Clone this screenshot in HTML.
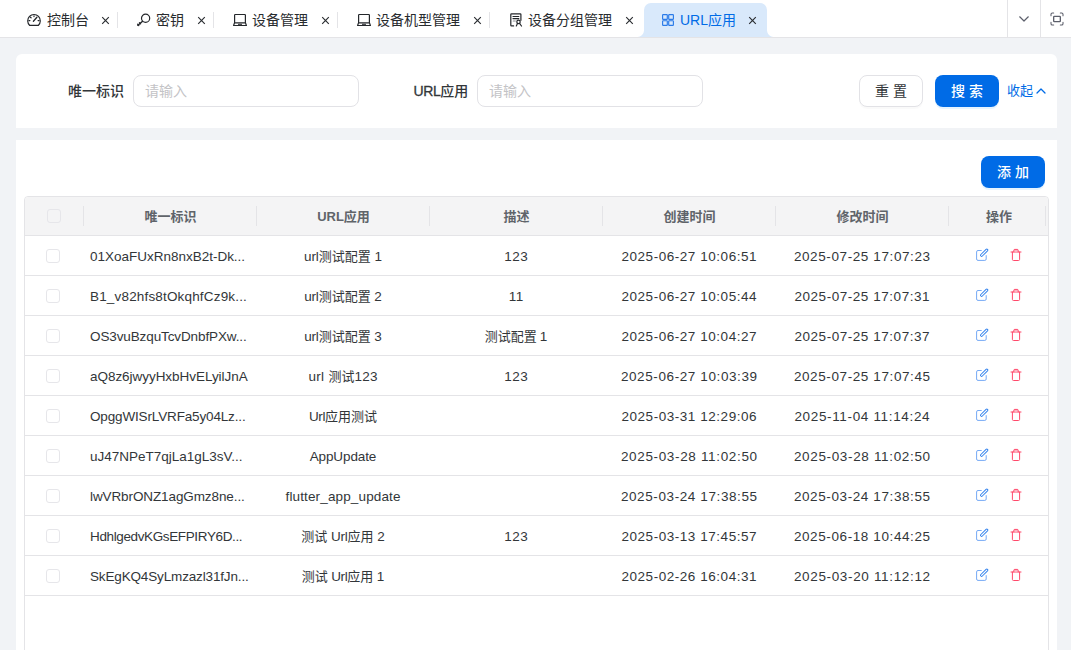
<!DOCTYPE html>
<html lang="zh-CN">
<head>
<meta charset="utf-8">
<title>URL应用</title>
<style>
*{box-sizing:border-box;margin:0;padding:0}
html,body{width:1071px;height:650px;overflow:hidden}
body{background:#f1f3f6;font-family:"Liberation Sans","Noto Sans CJK SC",sans-serif;font-size:14px;color:#323639;position:relative}
.abs{position:absolute}
/* tab bar */
#tabbar{position:absolute;left:0;top:0;width:1071px;height:38px;background:#fff;border-bottom:1px solid #e4e4e7}
.tab{position:absolute;top:2px;height:37px;line-height:37px;font-size:14px;color:#282b2e;white-space:nowrap}
.tab .t{position:absolute;top:1px}
.tab svg{position:absolute}
.ti{fill:none;stroke:#24272b;stroke-width:1.2;stroke-linecap:round;stroke-linejoin:round}
.sep{position:absolute;top:12px;width:1px;height:16px;background:#e4e4e7}
.vline{position:absolute;top:0;width:1px;height:37px;background:#e4e4e7}
.x{position:absolute;top:15.5px;margin-left:-.5px;width:9px;height:9px}
.x svg{display:block;width:9px;height:9px;stroke:#2a2d31;stroke-width:1.15;fill:none}
#active{position:absolute;left:644px;top:3px;width:123px;height:34px;background:#d9e9fb;border-radius:7px 7px 0 0}
#active:before,#active:after{content:"";position:absolute;bottom:0;width:7px;height:7px}
#active:before{left:-7px;background:radial-gradient(circle at 0 0,transparent 6.5px,#d9e9fb 7.5px)}
#active:after{right:-7px;background:radial-gradient(circle at 100% 0,transparent 6.5px,#d9e9fb 7.5px)}
/* cards */
.card{position:absolute;left:16px;width:1041px;background:#fff;border-radius:6px}
.lbl{position:absolute;font-weight:500;font-size:14px;line-height:32px;top:75px;white-space:nowrap}
.inp{position:absolute;top:75px;height:32px;width:226px;border:1px solid #e2e2e6;border-radius:8px;background:#fff;line-height:30px;padding-left:11px;color:#c3c3c6;font-size:14px}
.btn{position:absolute;height:32px;width:64px;border-radius:8px;text-align:center;line-height:30px;font-size:14px;white-space:nowrap}
.btn.def{border:1px solid #e2e2e6;background:#fff;color:#323639;box-shadow:0 2px 0 rgba(0,0,0,.02)}
.btn.pri{background:#006be6;color:#fff;font-weight:500;line-height:32px;box-shadow:0 2px 0 rgba(5,145,255,.1)}
/* table */
#tbl{position:absolute;left:24px;top:196px;width:1025px;height:460px;border:1px solid #e4e4e7;border-radius:4px 4px 0 0;background:#fff;overflow:hidden}
#thead{position:absolute;left:0;top:0;width:1023px;height:39px;background:#f4f4f5;border-bottom:1px solid #e4e4e7;border-radius:3px 3px 0 0}
.th{position:absolute;top:0;height:39px;line-height:39px;text-align:center;font-weight:700;font-size:13px;color:#60646a;white-space:nowrap}
.hs{position:absolute;top:9px;width:1px;height:20px;background:#e4e4e7}
.row{position:absolute;left:25px;width:1023px;height:40px;border-bottom:1px solid #e4e4e7;line-height:41px;font-size:13px;color:#323639}
.row b{font-weight:400;font-size:13.5px}
.cb{position:absolute;width:14px;height:14px;border:1px solid #e6e6ea;border-radius:3px}
.c{position:absolute;top:0;height:39px;white-space:nowrap;text-align:center}
.c.id{left:65px;text-align:left}
.c.c2{left:231.5px;width:173px}
.c.c3{left:404.5px;width:173px}
.c.c4{left:577.5px;width:173px}
.c.c5{left:750.5px;width:173px}
.ic{width:14px;height:14px;fill:none;stroke-width:.95;stroke-linecap:round;stroke-linejoin:round;display:block}
.ed{stroke:#2f80ed}
.dl{stroke:#ff3f63}
.edw{position:absolute;left:950px;top:12px}
.dlw{position:absolute;left:984px;top:12px}
</style>
</head>
<body>
<div id="tabbar">
  <div id="active"></div>
  <!-- tab 1 -->
<svg class="abs ti" style="left:27px;top:13px" width="14" height="14" viewBox="0 0 14 14"><path d="M2.75 12.45A6.3 6.3 0 1 1 11.25 12.45Z"/><path d="M6.4 8.2L9.9 4.3" stroke-width="1.3"/><path d="M7 2.9v.7M1.9 7.6h1M11.1 7.6h1M3.4 4.2l.7.6"/></svg>
<span class="tab" style="left:47px">控制台</span>
<span class="x" style="left:101px"><svg viewBox="0 0 9 9"><path d="M1.2 1.200l6.600 6.600M7.800 1.200l-6.600 6.600"/></svg></span>
<i class="sep" style="left:117px"></i>
<!-- tab 2 -->
<svg class="abs ti" style="left:135.5px;top:13px" width="15" height="14" viewBox="0 0 15 14"><circle cx="9.6" cy="5.3" r="4.1"/><path d="M6.6 8.2L1.9 12.2" stroke-width="1.5"/><path d="M3.4 9.6l1.2 1.3M1.6 11.2l1.2 1.3" stroke-width="1.2"/></svg>
<span class="tab" style="left:156px">密钥</span>
<span class="x" style="left:197px"><svg viewBox="0 0 9 9"><path d="M1.2 1.200l6.600 6.600M7.800 1.200l-6.600 6.600"/></svg></span>
<i class="sep" style="left:213px"></i>
<!-- tab 3 -->
<svg class="abs ti" style="left:233px;top:13px" width="14" height="14" viewBox="0 0 14 14"><path d="M1.6 9.6V2.2a.7.7 0 0 1 .7-.7h9.4a.7.7 0 0 1 .7.7v7.4"/><path d="M1.5 9.9h11l.9 2.6H.6z"/><path d="M5.4 11.3h3.2" stroke-width="1"/></svg>
<span class="tab" style="left:252px">设备管理</span>
<span class="x" style="left:321px"><svg viewBox="0 0 9 9"><path d="M1.2 1.200l6.600 6.600M7.800 1.200l-6.600 6.600"/></svg></span>
<i class="sep" style="left:337px"></i>
<!-- tab 4 -->
<svg class="abs ti" style="left:357px;top:13px" width="14" height="14" viewBox="0 0 14 14"><path d="M1.6 9.6V2.2a.7.7 0 0 1 .7-.7h9.4a.7.7 0 0 1 .7.7v7.4"/><path d="M1.5 9.9h11l.9 2.6H.6z"/><path d="M5.4 11.3h3.2" stroke-width="1"/></svg>
<span class="tab" style="left:376px">设备机型管理</span>
<span class="x" style="left:473px"><svg viewBox="0 0 9 9"><path d="M1.2 1.200l6.600 6.600M7.800 1.200l-6.600 6.600"/></svg></span>
<i class="sep" style="left:489px"></i>
<!-- tab 5 -->
<svg class="abs ti" style="left:509px;top:13px" width="14" height="14" viewBox="0 0 14 14"><path d="M4.6 12.9H2.5a.7.7 0 0 1-.7-.7V1.5a.7.7 0 0 1 .7-.7h8.700a.7.7 0 0 1 .7.7v5.800"/><path d="M4 3.500h5.800M4 5.600h5.800"/><path d="M4.300 8h2" stroke="#8a8c90"/><circle cx="9.500" cy="8.900" r="1.700"/><path d="M8.500 10.400L7.300 13M10.500 10.400L12.500 13"/></svg>
<span class="tab" style="left:528px">设备分组管理</span>
<span class="x" style="left:625px"><svg viewBox="0 0 9 9"><path d="M1.2 1.200l6.600 6.600M7.800 1.200l-6.600 6.600"/></svg></span>
<!-- tab 6 active -->
<svg class="abs" style="left:661px;top:13px" width="14" height="14" viewBox="0 0 14 14" fill="none" stroke="#2b7be9" stroke-width="1.15"><rect x="1.600" y="1.600" width="4.700" height="4.700" rx=".6"/><rect x="7.700" y="1.600" width="4.700" height="4.700" rx=".6"/><rect x="1.600" y="7.700" width="4.700" height="4.700" rx=".6"/><rect x="7.700" y="7.700" width="4.700" height="4.700" rx=".6"/></svg>
<span class="tab" style="left:680px;color:#006be6">URL应用</span>
<span class="x" style="left:748px"><svg viewBox="0 0 9 9"><path d="M1.2 1.200l6.600 6.600M7.800 1.200l-6.600 6.600"/></svg></span>
<!-- right tools -->
<i class="vline" style="left:1007px"></i>
<svg class="abs" style="left:1018px;top:13px" width="12" height="12" viewBox="0 0 12 12" fill="none" stroke="#5c5f6b" stroke-width="1.2" stroke-linecap="round" stroke-linejoin="round"><path d="M1.700 3.800L6 8l4.300-4.200"/></svg>
<i class="vline" style="left:1040px"></i>
<svg class="abs" style="left:1049px;top:11px" width="16" height="16" viewBox="0 0 24 24" fill="none" stroke="#5c5f6b" stroke-width="2" stroke-linecap="round" stroke-linejoin="round"><path stroke-width="1.600" d="M3 7V5a2 2 0 0 1 2-2h2M17 3h2a2 2 0 0 1 2 2v2M21 17v2a2 2 0 0 1-2 2h-2M7 21H5a2 2 0 0 1-2-2v-2"/><rect width="10" height="8" x="7" y="8" rx="1"/></svg>

</div>

<div class="card" style="top:54px;height:74px;border-radius:6px 6px 0 0"></div>
<div class="lbl" style="left:68px">唯一标识</div>
<div class="inp" style="left:133px">请输入</div>
<div class="lbl" style="left:413.5px"><span style="-webkit-text-stroke:.3px #323639;letter-spacing:-.4px">URL</span>应用</div>
<div class="inp" style="left:477px">请输入</div>
<div class="btn def" style="left:859px;top:75px">重 置</div>
<div class="btn pri" style="left:935px;top:75px">搜 索</div>
<div class="abs" style="left:1007px;top:75px;line-height:32px;color:#006be6;font-size:13px;white-space:nowrap">收起</div>
<svg class="abs" style="left:1035px;top:85px" width="12" height="12" viewBox="0 0 12 12" fill="none" stroke="#006be6" stroke-width="1.3" stroke-linecap="round" stroke-linejoin="round"><path d="M2 8l4-4 4 4"/></svg>

<div class="card" style="top:140px;height:520px;border-radius:0"></div>
<div class="btn pri" style="left:981px;top:156px">添 加</div>

<div id="tbl">
  <div id="thead">
    <span class="cb" style="left:22px;top:12px"></span>
    <i class="hs" style="left:58px"></i>
    <span class="th" style="left:59px;width:173px">唯一标识</span>
    <i class="hs" style="left:231px"></i>
    <span class="th" style="left:232px;width:173px">URL应用</span>
    <i class="hs" style="left:404px"></i>
    <span class="th" style="left:405px;width:173px">描述</span>
    <i class="hs" style="left:577px"></i>
    <span class="th" style="left:578px;width:173px">创建时间</span>
    <i class="hs" style="left:750px"></i>
    <span class="th" style="left:751px;width:173px">修改时间</span>
    <i class="hs" style="left:923px"></i>
    <span class="th" style="left:924px;width:100px">操作</span>
    <i class="hs" style="left:1020px"></i>
  </div>
</div>
<div class="row" style="top:236px"><span class="cb" style="left:21.2px;top:13px"></span><span class="c id"><b style="letter-spacing:-0.01px;margin-right:0.01px">01XoaFUxRn8nxB2t-Dk...</b></span><span class="c c2"><b style="letter-spacing:-0.12px">url</b>测试配置<b style="letter-spacing:-0.12px;margin-right:0.12px">&nbsp;1</b></span><span class="c c3"><b style="letter-spacing:0.55px;margin-right:-0.55px">123</b></span><span class="c c4"><b style="letter-spacing:0.54px;margin-right:-0.54px">2025-06-27 10:06:51</b></span><span class="c c5"><b style="letter-spacing:0.60px;margin-right:-0.60px">2025-07-25 17:07:23</b></span><span class="edw"><svg class="ic ed" viewBox="0 0 14 14"><path d="M6.300 2.500H3a1.400 1.400 0 0 0-1.400 1.400v7.100a1.400 1.400 0 0 0 1.400 1.400h6.800a1.400 1.400 0 0 0 1.400-1.400V7.600" stroke="#6ea4f4"/><rect x="-1.050" y="-4.700" width="2.100" height="9.400" rx="1.050" transform="translate(9.200 4.700) rotate(45)"/></svg></span><span class="dlw"><svg class="ic dl" viewBox="0 0 14 14"><path d="M2 4h10"/><path d="M3.400 4v7.400a1.100 1.100 0 0 0 1.100 1.100h5a1.100 1.100 0 0 0 1.100-1.100V4"/><path d="M4.800 3.900V2.300a.9.900 0 0 1 .9-.9h2.600a.9.900 0 0 1 .9.900v1.600" fill="#fbb4c2"/></svg></span></div>
<div class="row" style="top:276px"><span class="cb" style="left:21.2px;top:13px"></span><span class="c id"><b style="letter-spacing:0.17px;margin-right:-0.17px">B1_v82hfs8tOkqhfCz9k...</b></span><span class="c c2"><b style="letter-spacing:-0.18px">url</b>测试配置<b style="letter-spacing:-0.18px;margin-right:0.18px">&nbsp;2</b></span><span class="c c3"><b style="letter-spacing:0.55px;margin-right:-0.55px">11</b></span><span class="c c4"><b style="letter-spacing:0.54px;margin-right:-0.54px">2025-06-27 10:05:44</b></span><span class="c c5"><b style="letter-spacing:0.54px;margin-right:-0.54px">2025-07-25 17:07:31</b></span><span class="edw"><svg class="ic ed" viewBox="0 0 14 14"><path d="M6.300 2.500H3a1.400 1.400 0 0 0-1.400 1.400v7.100a1.400 1.400 0 0 0 1.400 1.400h6.800a1.400 1.400 0 0 0 1.400-1.400V7.600" stroke="#6ea4f4"/><rect x="-1.050" y="-4.700" width="2.100" height="9.400" rx="1.050" transform="translate(9.200 4.700) rotate(45)"/></svg></span><span class="dlw"><svg class="ic dl" viewBox="0 0 14 14"><path d="M2 4h10"/><path d="M3.400 4v7.400a1.100 1.100 0 0 0 1.100 1.100h5a1.100 1.100 0 0 0 1.100-1.100V4"/><path d="M4.800 3.900V2.300a.9.900 0 0 1 .9-.9h2.600a.9.900 0 0 1 .9.900v1.600" fill="#fbb4c2"/></svg></span></div>
<div class="row" style="top:316px"><span class="cb" style="left:21.2px;top:13px"></span><span class="c id"><b style="letter-spacing:-0.11px;margin-right:0.11px">OS3vuBzquTcvDnbfPXw...</b></span><span class="c c2"><b style="letter-spacing:-0.18px">url</b>测试配置<b style="letter-spacing:-0.18px;margin-right:0.18px">&nbsp;3</b></span><span class="c c3">测试配置<b style="letter-spacing:-1.00px;margin-right:1.00px">&nbsp;1</b></span><span class="c c4"><b style="letter-spacing:0.54px;margin-right:-0.54px">2025-06-27 10:04:27</b></span><span class="c c5"><b style="letter-spacing:0.54px;margin-right:-0.54px">2025-07-25 17:07:37</b></span><span class="edw"><svg class="ic ed" viewBox="0 0 14 14"><path d="M6.300 2.500H3a1.400 1.400 0 0 0-1.400 1.400v7.100a1.400 1.400 0 0 0 1.400 1.400h6.800a1.400 1.400 0 0 0 1.400-1.400V7.600" stroke="#6ea4f4"/><rect x="-1.050" y="-4.700" width="2.100" height="9.400" rx="1.050" transform="translate(9.200 4.700) rotate(45)"/></svg></span><span class="dlw"><svg class="ic dl" viewBox="0 0 14 14"><path d="M2 4h10"/><path d="M3.400 4v7.400a1.100 1.100 0 0 0 1.100 1.100h5a1.100 1.100 0 0 0 1.100-1.100V4"/><path d="M4.800 3.900V2.300a.9.900 0 0 1 .9-.9h2.600a.9.900 0 0 1 .9.900v1.600" fill="#fbb4c2"/></svg></span></div>
<div class="row" style="top:356px"><span class="cb" style="left:21.2px;top:13px"></span><span class="c id"><b style="letter-spacing:-0.04px;margin-right:0.04px">aQ8z6jwyyHxbHvELyilJnA</b></span><span class="c c2"><b style="letter-spacing:0.27px">url&nbsp;</b>测试<b style="letter-spacing:0.27px;margin-right:-0.27px">123</b></span><span class="c c3"><b style="letter-spacing:0.55px;margin-right:-0.55px">123</b></span><span class="c c4"><b style="letter-spacing:0.60px;margin-right:-0.60px">2025-06-27 10:03:39</b></span><span class="c c5"><b style="letter-spacing:0.60px;margin-right:-0.60px">2025-07-25 17:07:45</b></span><span class="edw"><svg class="ic ed" viewBox="0 0 14 14"><path d="M6.300 2.500H3a1.400 1.400 0 0 0-1.400 1.400v7.100a1.400 1.400 0 0 0 1.400 1.400h6.800a1.400 1.400 0 0 0 1.400-1.400V7.600" stroke="#6ea4f4"/><rect x="-1.050" y="-4.700" width="2.100" height="9.400" rx="1.050" transform="translate(9.200 4.700) rotate(45)"/></svg></span><span class="dlw"><svg class="ic dl" viewBox="0 0 14 14"><path d="M2 4h10"/><path d="M3.400 4v7.400a1.100 1.100 0 0 0 1.100 1.100h5a1.100 1.100 0 0 0 1.100-1.100V4"/><path d="M4.800 3.900V2.300a.9.900 0 0 1 .9-.9h2.600a.9.900 0 0 1 .9.900v1.600" fill="#fbb4c2"/></svg></span></div>
<div class="row" style="top:396px"><span class="cb" style="left:21.2px;top:13px"></span><span class="c id"><b style="letter-spacing:-0.15px;margin-right:0.15px">OpggWISrLVRFa5y04Lz...</b></span><span class="c c2"><b style="letter-spacing:-0.37px">Url</b>应用测试</span><span class="c c3"></span><span class="c c4"><b style="letter-spacing:0.54px;margin-right:-0.54px">2025-03-31 12:29:06</b></span><span class="c c5"><b style="letter-spacing:0.66px;margin-right:-0.66px">2025-11-04 11:14:24</b></span><span class="edw"><svg class="ic ed" viewBox="0 0 14 14"><path d="M6.300 2.500H3a1.400 1.400 0 0 0-1.400 1.400v7.100a1.400 1.400 0 0 0 1.400 1.400h6.800a1.400 1.400 0 0 0 1.400-1.400V7.600" stroke="#6ea4f4"/><rect x="-1.050" y="-4.700" width="2.100" height="9.400" rx="1.050" transform="translate(9.200 4.700) rotate(45)"/></svg></span><span class="dlw"><svg class="ic dl" viewBox="0 0 14 14"><path d="M2 4h10"/><path d="M3.400 4v7.400a1.100 1.100 0 0 0 1.100 1.100h5a1.100 1.100 0 0 0 1.100-1.100V4"/><path d="M4.800 3.900V2.300a.9.900 0 0 1 .9-.9h2.600a.9.900 0 0 1 .9.900v1.600" fill="#fbb4c2"/></svg></span></div>
<div class="row" style="top:436px"><span class="cb" style="left:21.2px;top:13px"></span><span class="c id"><b style="letter-spacing:-0.01px;margin-right:0.01px">uJ47NPeT7qjLa1gL3sV...</b></span><span class="c c2"><b style="letter-spacing:-0.11px;margin-right:0.11px">AppUpdate</b></span><span class="c c3"></span><span class="c c4"><b style="letter-spacing:0.66px;margin-right:-0.66px">2025-03-28 11:02:50</b></span><span class="c c5"><b style="letter-spacing:0.66px;margin-right:-0.66px">2025-03-28 11:02:50</b></span><span class="edw"><svg class="ic ed" viewBox="0 0 14 14"><path d="M6.300 2.500H3a1.400 1.400 0 0 0-1.400 1.400v7.100a1.400 1.400 0 0 0 1.400 1.400h6.800a1.400 1.400 0 0 0 1.400-1.400V7.600" stroke="#6ea4f4"/><rect x="-1.050" y="-4.700" width="2.100" height="9.400" rx="1.050" transform="translate(9.200 4.700) rotate(45)"/></svg></span><span class="dlw"><svg class="ic dl" viewBox="0 0 14 14"><path d="M2 4h10"/><path d="M3.400 4v7.400a1.100 1.100 0 0 0 1.100 1.100h5a1.100 1.100 0 0 0 1.100-1.100V4"/><path d="M4.800 3.900V2.300a.9.900 0 0 1 .9-.9h2.600a.9.900 0 0 1 .9.900v1.600" fill="#fbb4c2"/></svg></span></div>
<div class="row" style="top:476px"><span class="cb" style="left:21.2px;top:13px"></span><span class="c id"><b style="letter-spacing:-0.10px;margin-right:0.10px">lwVRbrONZ1agGmz8ne...</b></span><span class="c c2"><b style="letter-spacing:0.14px;margin-right:-0.14px">flutter_app_update</b></span><span class="c c3"></span><span class="c c4"><b style="letter-spacing:0.60px;margin-right:-0.60px">2025-03-24 17:38:55</b></span><span class="c c5"><b style="letter-spacing:0.60px;margin-right:-0.60px">2025-03-24 17:38:55</b></span><span class="edw"><svg class="ic ed" viewBox="0 0 14 14"><path d="M6.300 2.500H3a1.400 1.400 0 0 0-1.400 1.400v7.100a1.400 1.400 0 0 0 1.400 1.400h6.800a1.400 1.400 0 0 0 1.400-1.400V7.600" stroke="#6ea4f4"/><rect x="-1.050" y="-4.700" width="2.100" height="9.400" rx="1.050" transform="translate(9.200 4.700) rotate(45)"/></svg></span><span class="dlw"><svg class="ic dl" viewBox="0 0 14 14"><path d="M2 4h10"/><path d="M3.400 4v7.400a1.100 1.100 0 0 0 1.100 1.100h5a1.100 1.100 0 0 0 1.100-1.100V4"/><path d="M4.800 3.900V2.300a.9.900 0 0 1 .9-.9h2.600a.9.900 0 0 1 .9.900v1.600" fill="#fbb4c2"/></svg></span></div>
<div class="row" style="top:516px"><span class="cb" style="left:21.2px;top:13px"></span><span class="c id"><b style="letter-spacing:-0.37px;margin-right:0.37px">HdhlgedvKGsEFPIRY6D...</b></span><span class="c c2">测试<b style="letter-spacing:-0.20px">&nbsp;Url</b>应用<b style="letter-spacing:-0.20px;margin-right:0.20px">&nbsp;2</b></span><span class="c c3"><b style="letter-spacing:0.55px;margin-right:-0.55px">123</b></span><span class="c c4"><b style="letter-spacing:0.54px;margin-right:-0.54px">2025-03-13 17:45:57</b></span><span class="c c5"><b style="letter-spacing:0.60px;margin-right:-0.60px">2025-06-18 10:44:25</b></span><span class="edw"><svg class="ic ed" viewBox="0 0 14 14"><path d="M6.300 2.500H3a1.400 1.400 0 0 0-1.400 1.400v7.100a1.400 1.400 0 0 0 1.400 1.400h6.800a1.400 1.400 0 0 0 1.400-1.400V7.600" stroke="#6ea4f4"/><rect x="-1.050" y="-4.700" width="2.100" height="9.400" rx="1.050" transform="translate(9.200 4.700) rotate(45)"/></svg></span><span class="dlw"><svg class="ic dl" viewBox="0 0 14 14"><path d="M2 4h10"/><path d="M3.400 4v7.400a1.100 1.100 0 0 0 1.100 1.100h5a1.100 1.100 0 0 0 1.100-1.100V4"/><path d="M4.800 3.900V2.300a.9.900 0 0 1 .9-.9h2.600a.9.900 0 0 1 .9.900v1.600" fill="#fbb4c2"/></svg></span></div>
<div class="row" style="top:556px"><span class="cb" style="left:21.2px;top:13px"></span><span class="c id"><b style="letter-spacing:-0.15px;margin-right:0.15px">SkEgKQ4SyLmzazl31fJn...</b></span><span class="c c2">测试<b style="letter-spacing:-0.34px">&nbsp;Url</b>应用<b style="letter-spacing:-0.34px;margin-right:0.34px">&nbsp;1</b></span><span class="c c3"></span><span class="c c4"><b style="letter-spacing:0.54px;margin-right:-0.54px">2025-02-26 16:04:31</b></span><span class="c c5"><b style="letter-spacing:0.66px;margin-right:-0.66px">2025-03-20 11:12:12</b></span><span class="edw"><svg class="ic ed" viewBox="0 0 14 14"><path d="M6.300 2.500H3a1.400 1.400 0 0 0-1.400 1.400v7.100a1.400 1.400 0 0 0 1.400 1.400h6.800a1.400 1.400 0 0 0 1.400-1.400V7.600" stroke="#6ea4f4"/><rect x="-1.050" y="-4.700" width="2.100" height="9.400" rx="1.050" transform="translate(9.200 4.700) rotate(45)"/></svg></span><span class="dlw"><svg class="ic dl" viewBox="0 0 14 14"><path d="M2 4h10"/><path d="M3.400 4v7.400a1.100 1.100 0 0 0 1.100 1.100h5a1.100 1.100 0 0 0 1.100-1.100V4"/><path d="M4.800 3.900V2.300a.9.900 0 0 1 .9-.9h2.600a.9.900 0 0 1 .9.900v1.600" fill="#fbb4c2"/></svg></span></div>
</body>
</html>
